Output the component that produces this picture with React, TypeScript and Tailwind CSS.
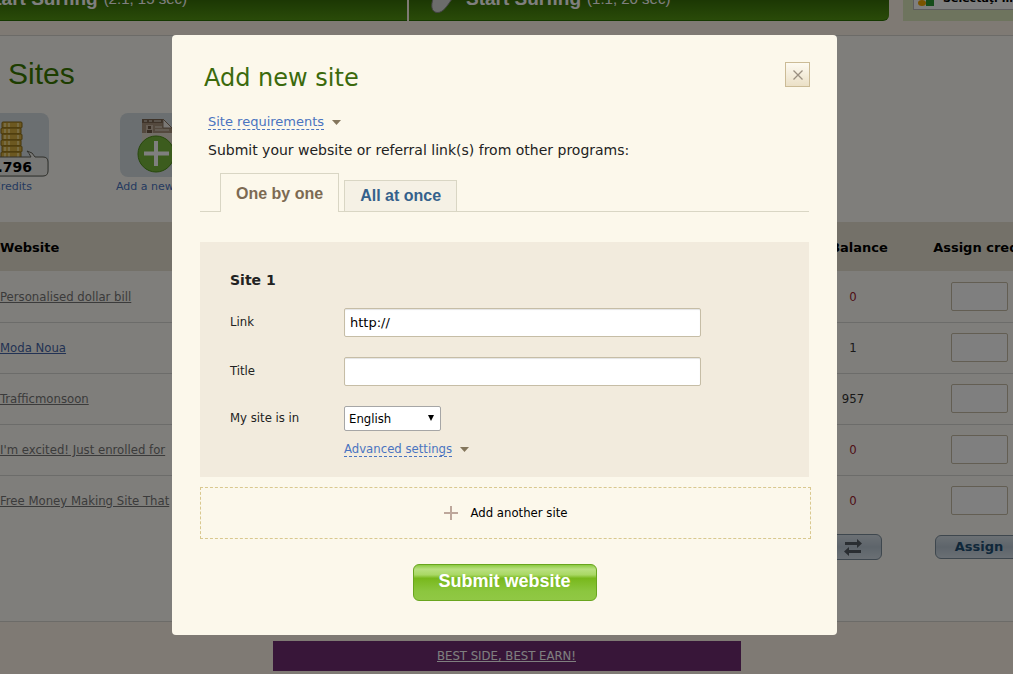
import { useState } from 'react';

interface Site {
  name: string;
  balance: number;
  active?: boolean;
}

const SITES: Site[] = [
  { name: 'Personalised dollar bill', balance: 0 },
  { name: 'Moda Noua', balance: 1, active: true },
  { name: 'Trafficmonsoon', balance: 957 },
  { name: "I'm excited! Just enrolled for", balance: 0 },
  { name: 'Free Money Making Site That', balance: 0 },
];

const COINS = [9, 15, 21, 27, 33, 39];

function Caret() {
  return (
    <svg width="9" height="5" viewBox="0 0 9 5" aria-hidden="true">
      <path d="M0 0h9L4.5 5z" fill="#84765c" />
    </svg>
  );
}

function SurfBar() {
  return (
    <div className="flex h-[21px] overflow-hidden whitespace-nowrap font-['Liberation_Sans'] text-white">
      <a href="#surf-2" className="flex h-full w-[407px] shrink-0 items-end justify-end border-b border-[#2a7000] bg-linear-to-b from-[#387008] to-[#549612] pr-[220px]">
        <span className="mb-[11px] text-[19px] leading-5 font-bold">Start Surfing</span>
        <span className="mb-[11px] ml-1.5 text-[15px] leading-5">(2:1, 15 sec)</span>
      </a>
      <a href="#surf-1" className="ml-0.5 flex h-full min-w-0 flex-1 items-end rounded-br-md border-b border-[#2a7000] bg-linear-to-b from-[#387008] to-[#549612] pl-[22px]">
        <svg width="24" height="21" viewBox="0 0 24 21" className="mr-[11px]" aria-hidden="true">
          <path d="M2 0C0 6 0 13 6 13.500C12 14 16 7 21 0z" fill="#d8d8d8" stroke="#888" />
        </svg>
        <span className="mb-[11px] text-[19px] leading-5 font-bold">Start Surfing</span>
        <span className="mb-[11px] ml-1.5 text-[15px] leading-5">(1:1, 20 sec)</span>
      </a>
      <div className="ml-3.5 w-[110px] shrink-0 bg-[#dce8bc] pl-[10px]">
        <div className="flex h-[10px] items-end overflow-hidden border-b border-l border-[#bbb] bg-white pl-1 font-['DejaVu_Sans'] text-[11px] leading-4 font-bold text-black">
          <svg width="17" height="6" viewBox="0 0 17 6" className="mr-2 mb-[3px] shrink-0" aria-hidden="true">
            <ellipse cx="4" cy="3" rx="4" ry="3" fill="#f5a800" />
            <path d="M8 0h8v6H8z" fill="#2c9a35" />
          </svg>
          <span className="mb-0.5">Selectaţi limba</span>
        </div>
      </div>
    </div>
  );
}

function Toolbar() {
  return (
    <div className="-ml-6 flex gap-[71px] text-center text-[11px] leading-4 text-[#4a74c0]">
      <a href="#credits" className="flex w-[73px] flex-col items-center gap-0.5 whitespace-nowrap">
        <span className="relative block h-16 w-full rounded-lg bg-[#d6dfe3]">
          <svg width="73" height="64" viewBox="0 0 73 64" aria-hidden="true">
            {COINS.map((y, i) => (
              <g key={y}>
                <rect x={i % 2 ? 25 : 26} y={y} width="20" height="6" rx="1" fill="#d9b040" stroke="#8a6a10" />
                <path d={`M29 ${y + 1}v4M33 ${y + 1}v4M42 ${y + 1}v4`} stroke="#f5e29a" strokeWidth="1.500" />
              </g>
            ))}
            <path d="M0 44h55q-2-4-4-6q6 1 8 6h8q5 0 5 5v9q0 5-5 5H0z" fill="#eeeeea" stroke="#626258" />
          </svg>
          <b className="absolute right-[17px] bottom-0 text-sm leading-5 text-black">1.796</b>
        </span>
        Credits
      </a>
      <a href="#add" className="flex w-[73px] flex-col items-center gap-0.5 whitespace-nowrap">
        <span className="block h-16 w-full rounded-lg bg-[#d6dfe3]">
          <svg width="73" height="64" viewBox="0 0 73 64" aria-hidden="true">
            <path d="M22 6h21l9 9v30H22z" fill="#e4dccf" />
            <path d="M22 6h21l9 9v5H22z" fill="#a8937d" />
            <path d="M22 6h21v4H22z" fill="#7d6752" />
            <path d="M43 6l9 9h-9z" fill="#f4f0ea" stroke="#8a7762" />
            <path d="M24 8h3M29 8h3M34 8h7" stroke="#e9e1d5" />
            <path d="M26 12h7v8h-7z" fill="#cdbba8" />
            <path d="M28 13h3v3h-3zM27 17h5v3h-5z" fill="#6f5945" />
            <path d="M35 14h7M35 17h14" stroke="#e4dccf" />
            <circle cx="36" cy="41" r="18" fill="#78b93d" stroke="#4f8e18" />
            <path d="M36 28v25M24 40.500h25" stroke="#fff" strokeWidth="4" />
          </svg>
        </span>
        Add a new site
      </a>
    </div>
  );
}

function SitesTable() {
  return (
    <table className="w-[calc(100%+29px)] table-fixed border-collapse text-center">
      <colgroup>
        <col />
        <col className="w-[126px]" />
        <col className="w-[126px]" />
      </colgroup>
      <thead>
        <tr className="h-[49px] bg-[#e9e3d2] font-['DejaVu_Sans'] whitespace-nowrap text-black">
          <th className="pt-[3px] text-left">Website</th>
          <th className="pt-[3px] pl-3">Balance</th>
          <th className="pt-[3px] pl-3">Assign credits</th>
        </tr>
      </thead>
      <tbody>
        {SITES.map((site) => (
          <tr key={site.name} className="h-[51px] border-b border-[#d8d8d4] last:border-0">
            <td className="text-left">
              <a href="#site" className={site.active ? 'text-[#4565a8] underline' : 'text-[#777] underline'}>
                {site.name}
              </a>
            </td>
            <td className={site.balance === 0 ? 'text-[#a02030]' : 'text-[#333]'}>{site.balance}</td>
            <td>
              <input
                type="text"
                aria-label={`Credits for ${site.name}`}
                className="mx-auto block h-[29px] w-[57px] rounded-xs border border-[#c6bda6] bg-white"
              />
            </td>
          </tr>
        ))}
      </tbody>
      <tfoot>
        <tr className="h-[42px]">
          <td />
          <td>
            <button
              type="button"
              aria-label="Move credits"
              className="mx-auto flex h-[26px] w-[57px] items-center justify-center rounded-md border border-[#7c8e9c] bg-linear-to-b from-[#d8e2ea] via-[#bccad6] to-[#d5e0e9]"
            >
              <svg width="18" height="17" viewBox="0 0 18 17" fill="#555d64" aria-hidden="true">
                <path d="M1 3h12V0l5 4.500L13 9V6H1z" />
                <path d="M17 14H5v3l-5-4.500L5 8v3h12z" />
              </svg>
            </button>
          </td>
          <td>
            <button
              type="button"
              className="mx-auto block h-6 w-[88px] rounded-md border border-[#7c8e9c] bg-linear-to-b from-[#d8e2ea] via-[#bccad6] to-[#d5e0e9] font-['DejaVu_Sans'] font-bold text-[#214f74]"
            >
              Assign
            </button>
          </td>
        </tr>
      </tfoot>
    </table>
  );
}

function AddSiteDialog() {
  const [tab, setTab] = useState('one');
  const [link, setLink] = useState('http://');
  const [title, setTitle] = useState('');

  const active = 'h-[39px] border-b-0 bg-[#fcf8eb] pt-0.5 text-[#7c6a52]';
  const idle = 'h-8 bg-[#f5f1e5] text-[#34618c]';
  const label = 'w-[114px] pb-0.5';
  const field = "h-[29px] w-[357px] rounded-xs border border-[#c6bda6] bg-white px-[5px] font-['DejaVu_Sans'] text-black shadow-[inset_0_1px_1px_#e4e4e4]";

  return (
    <div role="dialog" aria-labelledby="dialog-title" className="w-[665px] rounded bg-[#fcf8eb] px-7 pt-[27px] pb-[34px]">
      <div className="flex items-start justify-between">
        <h2 id="dialog-title" className="pl-1 font-['DejaVu_Sans'] text-2xl leading-8 text-[#3b6a0c]">Add new site</h2>
        <button
          type="button"
          aria-label="Close"
          className="-mr-px flex size-[25px] items-center justify-center border border-[#cbbb96] bg-linear-to-b from-[#fdfaf1] to-[#ebe0c6]"
        >
          <svg width="10" height="10" viewBox="0 0 10 10" stroke="#9a8f80" strokeWidth="1.300" aria-hidden="true">
            <path d="M.5.5l9 9M9.500.5l-9 9" />
          </svg>
        </button>
      </div>

      <div className="mt-5 flex items-center gap-2 pl-2 font-['DejaVu_Sans']">
        <a href="#requirements" className="border-b border-dashed border-[#4a74c0] leading-[15px] text-[#4a74c0]">Site requirements</a>
        <Caret />
      </div>
      <p className="mt-3 pl-2 font-['DejaVu_Sans'] text-sm leading-4">
        Submit your website or referral link(s) from other programs:
      </p>

      <div role="tablist" className="mt-[15px] flex items-end gap-[5px] border-b border-[#d9d6c4] pl-5 font-['Liberation_Sans'] text-base font-bold">
        <button
          type="button"
          role="tab"
          aria-selected={tab === 'one'}
          onClick={() => setTab('one')}
          className={`-mb-px border border-[#d9d6c4] px-[15px] ${tab === 'one' ? active : idle}`}
        >
          One by one
        </button>
        <button
          type="button"
          role="tab"
          aria-selected={tab === 'all'}
          onClick={() => setTab('all')}
          className={`-mb-px border border-[#d9d6c4] px-[15px] ${tab === 'all' ? active : idle}`}
        >
          All at once
        </button>
      </div>

      <form onSubmit={(e) => e.preventDefault()}>
        <div className="mt-[30px] bg-[#f2ebdd] px-[30px] pt-[30px] pb-5">
          <h3 className="font-['DejaVu_Sans'] text-sm leading-4 font-bold">Site 1</h3>
          <div className="mt-5 flex items-center">
            <label htmlFor="link" className={label}>Link</label>
            <input id="link" type="text" value={link} onChange={(e) => setLink(e.target.value)} className={field} />
          </div>
          <div className="mt-5 flex items-center">
            <label htmlFor="title" className={label}>Title</label>
            <input id="title" type="text" value={title} onChange={(e) => setTitle(e.target.value)} className={field} />
          </div>
          <div className="mt-5 flex items-center">
            <label htmlFor="lang" className={label}>My site is in</label>
            <span className="relative">
              <select id="lang" className="block h-[25px] w-[97px] appearance-none rounded-xs border border-[#a6a6a6] bg-white pl-1 text-black">
                <option>English</option>
                <option>Română</option>
              </select>
              <svg width="6" height="6" viewBox="0 0 6 6" className="pointer-events-none absolute top-[9px] right-[7px]" aria-hidden="true">
                <path d="M0 0h6L3 6z" />
              </svg>
            </span>
          </div>
          <div className="mt-2.5 flex items-center gap-2 pl-[114px]">
            <a href="#advanced" className="border-b border-dashed border-[#4a74c0] leading-[15px] text-[#4a74c0]">Advanced settings</a>
            <Caret />
          </div>
        </div>

        <button
          type="button"
          className="mt-2.5 flex h-[52px] w-[calc(100%+2px)] items-center justify-center gap-[13px] border border-dashed border-[#d9c88f] text-black"
        >
          <svg width="14" height="14" viewBox="0 0 14 14" fill="#bda79b" aria-hidden="true">
            <path d="M6 0h2v6h6v2H8v6H6V8H0V6h6z" />
          </svg>
          Add another site
        </button>

        <button
          type="submit"
          className="mx-auto mt-[25px] block h-[37px] w-[184px] rounded-md border border-[#69a51e] bg-[linear-gradient(#8ccb42_0%,#b9e080_12%,#a9d864_28%,#78b81c_38%,#8cc63f_75%,#90c844_100%)] pb-1 font-['Liberation_Sans'] text-lg leading-8 font-bold text-white"
        >
          Submit website
        </button>
      </form>
    </div>
  );
}

export default function App() {
  return (
    <div className="relative h-screen overflow-hidden bg-[#fff5e8] font-['DejaVu_Sans_Condensed','DejaVu_Sans',sans-serif] text-[13px] text-[#222]">
      <SurfBar />
      <main className="mt-3.5 h-[587px] border-y border-[#d8d6d0] bg-[#fffdf6]">
        <h1 className="pt-5 pl-2 font-['Liberation_Sans'] text-[30px] leading-9 text-[#3b7a00]">Sites</h1>
        <div className="mt-[21px] h-[109px] font-['DejaVu_Sans']">
          <Toolbar />
        </div>
        <SitesTable />
      </main>
      <footer className="mt-[19px] flex justify-center">
        <a href="#ad" className="flex h-[30px] w-[468px] items-center justify-center bg-[#702c72] text-white underline">BEST SIDE, BEST EARN!</a>
      </footer>

      <div className="absolute inset-0 flex items-start justify-center overflow-y-auto bg-black/50 pt-[35px] pr-1">
        <AddSiteDialog />
      </div>
    </div>
  );
}
